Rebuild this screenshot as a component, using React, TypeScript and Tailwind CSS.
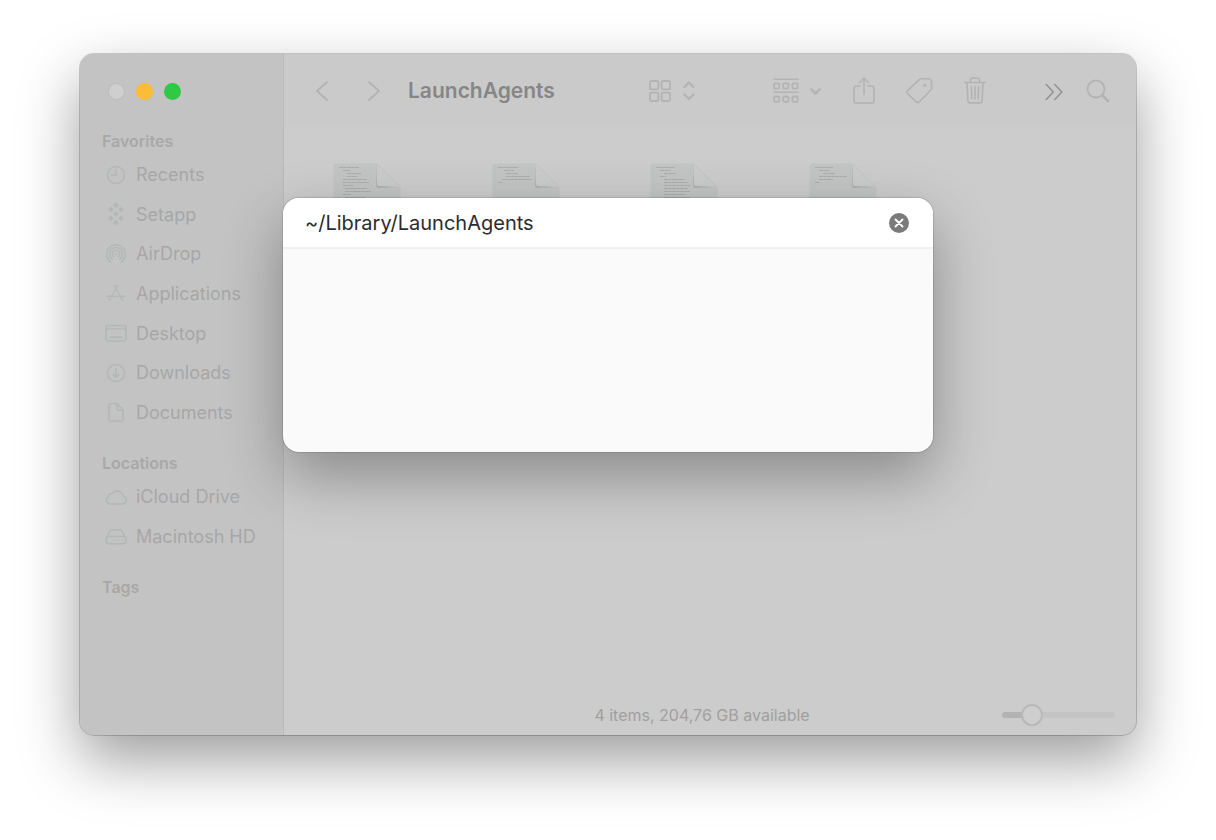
import { useState, type ReactNode } from "react";

type SidebarItem = { label: string; icon: ReactNode };

function Icon({ children }: { children: ReactNode }) {
  return (
    <svg
      className="size-6 shrink-0"
      viewBox="0 0 24 24"
      fill="none"
      stroke="#b4b7b7"
      strokeWidth={1.5}
      strokeLinecap="round"
      strokeLinejoin="round"
      aria-hidden="true"
    >
      {children}
    </svg>
  );
}

const FAVORITES: SidebarItem[] = [
  {
    label: "Recents",
    icon: (
      <Icon>
        <circle cx="12" cy="12" r="8.5" />
        <path d="M12 6.5V12H7.5" />
      </Icon>
    ),
  },
  {
    label: "Setapp",
    icon: (
      <Icon>
        <path
          d="M12 .8l2.500 2.500L12 5.800 9.500 3.300zM7 4.900l2.500 2.500L7 9.900 4.500 7.400zM17 4.900l2.500 2.500L17 9.900l-2.500-2.500zM12 9.500l2.500 2.500-2.500 2.500L9.500 12zM7 14.100l2.500 2.500L7 19.100l-2.500-2.500zM17 14.100l2.500 2.500-2.500 2.500-2.500-2.500zM12 18.200l2.500 2.500-2.500 2.500-2.500-2.500z"
          fill="#b4b7b7"
          strokeWidth={0.8}
        />
      </Icon>
    ),
  },
  {
    label: "AirDrop",
    icon: (
      <Icon>
        <path d="M7 20.2a9.4 9.4 0 1 1 10 0" />
        <path d="M8.3 17.3a6.5 6.5 0 1 1 7.4 0" />
        <path d="M9.8 14.9a3.7 3.7 0 1 1 4.4 0" />
        <circle cx="12" cy="12.3" r="1" fill="#b4b7b7" stroke="none" />
      </Icon>
    ),
  },
  {
    label: "Applications",
    icon: (
      <Icon>
        <path d="M10.3 4.5l8.2 14.5M13.7 4.500L7.800 14.900M5.600 18.600l.6-1M3 15.200h11.200M18 15.200h3" />
      </Icon>
    ),
  },
  {
    label: "Desktop",
    icon: (
      <Icon>
        <rect x="2" y="4.5" width="20" height="15.5" rx="2" />
        <path d="M2.5 7.7h19" />
        <path d="M7 16.300h10" strokeWidth={2} />
      </Icon>
    ),
  },
  {
    label: "Downloads",
    icon: (
      <Icon>
        <circle cx="12" cy="12" r="8.5" />
        <path d="M12 7.500v8.500M9 13.200l3 3 3-3" />
      </Icon>
    ),
  },
  {
    label: "Documents",
    icon: (
      <Icon>
        <path d="M13 3.500H7a2 2 0 0 0-2 2v13.500a2 2 0 0 0 2 2h10a2 2 0 0 0 2-2V10zM13 3.500V8.500A1.500 1.500 0 0 0 14.500 10H19" />
      </Icon>
    ),
  },
];

const LOCATIONS: SidebarItem[] = [
  {
    label: "iCloud Drive",
    icon: (
      <Icon>
        <path d="M6 19h12.200a4 4 0 0 0 .8-7.900A6 6 0 0 0 8 8.700a3.300 3.300 0 0 0-3.800 3.500A3.600 3.600 0 0 0 6 19z" />
      </Icon>
    ),
  },
  {
    label: "Macintosh HD",
    icon: (
      <Icon>
        <path d="M2.500 14.500l3.300-7.300a2.500 2.500 0 0 1 2.300-1.500h7.800a2.500 2.500 0 0 1 2.300 1.500l3.300 7.300" />
        <rect x="2" y="12.500" width="20" height="7.300" rx="2.500" />
        <path d="M10 16.200h9" strokeDasharray=".1 2.500" />
      </Icon>
    ),
  },
];

function SidebarSection({
  title,
  items = [],
  listClass = "",
}: {
  title: string;
  items?: SidebarItem[];
  listClass?: string;
}) {
  return (
    <section>
      <h2 className="pl-[22px] text-[16px] leading-[27px] font-semibold text-[#a8a8a8]">
        {title}
      </h2>
      {items.length > 0 && (
        <ul className={`grid auto-rows-fr ${listClass}`}>
          {items.map((item) => (
            <li key={item.label}>
              <a
                href={`#${item.label}`}
                className="flex h-full items-center gap-2 pl-6 text-[18px] whitespace-nowrap text-[#a7a7a7]"
              >
                {item.icon}
                {item.label}
              </a>
            </li>
          ))}
        </ul>
      )}
    </section>
  );
}

function ToolButton({
  label,
  className,
  viewBox,
  children,
}: {
  label: string;
  className: string;
  viewBox: string;
  children: ReactNode;
}) {
  return (
    <button aria-label={label} className="shrink-0">
      <svg
        className={className}
        viewBox={viewBox}
        fill="none"
        stroke="currentColor"
        strokeWidth={1.8}
        strokeLinecap="round"
        strokeLinejoin="round"
      >
        {children}
      </svg>
    </button>
  );
}

function Toolbar() {
  return (
    <header className="flex h-[73px] items-center bg-[#cacaca] pr-[26px] pl-8 text-[#b3b3b3]">
      <ToolButton label="Back" className="h-5 w-3" viewBox="0 0 12 20">
        <path d="M11 1L1 10l10 9" />
      </ToolButton>
      <div className="w-10" />
      <ToolButton label="Forward" className="h-5 w-3" viewBox="0 0 12 20">
        <path d="M1 1l10 9-10 9" />
      </ToolButton>
      <h1 className="ml-7 text-[21px] font-semibold text-[#868686]">
        LaunchAgents
      </h1>

      <div className="ml-auto flex items-center">
        <ToolButton label="View as icons" className="h-[22px] w-[46px]" viewBox="0 0 46 22">
          <rect x="1" y="1" width="8.4" height="8.4" rx="1.5" />
          <rect x="12.6" y="1" width="8.4" height="8.4" rx="1.5" />
          <rect x="1" y="12.6" width="8.4" height="8.4" rx="1.5" />
          <rect x="12.6" y="12.6" width="8.4" height="8.4" rx="1.5" />
          <path d="M35.500 7l4.500-4.500L44.500 7M35.500 14.500L40 19l4.500-4.500" strokeWidth={2.2} />
        </ToolButton>
      </div>
      <div className="ml-[78px] flex items-center">
        <ToolButton label="Group items" className="h-[26px] w-12" viewBox="0 0 48 26">
          <path d="M.9 1.2h24.200M.9 14.300h24.200" strokeWidth={1.5} />
          <rect x="1" y="5.3" width="5.2" height="5.3" rx="1.2" />
          <rect x="10.2" y="5.3" width="5.2" height="5.3" rx="1.2" />
          <rect x="19.4" y="5.3" width="5.2" height="5.3" rx="1.2" />
          <rect x="1" y="18.5" width="5.2" height="5.3" rx="1.2" />
          <rect x="10.2" y="18.5" width="5.2" height="5.3" rx="1.2" />
          <rect x="19.4" y="18.5" width="5.2" height="5.3" rx="1.2" />
          <path d="M38.500 11.500l4 4.200 4-4.200" strokeWidth={2.5} />
        </ToolButton>
      </div>
      <div className="ml-8 flex items-center gap-[31px]">
        <ToolButton label="Share" className="h-7 w-[22px]" viewBox="0 0 22 28">
          <path d="M7 9H3.300A2.300 2.300 0 0 0 1 11.300v12.400a2.300 2.300 0 0 0 2.300 2.300h15.400a2.300 2.300 0 0 0 2.300-2.300V11.300a2.300 2.300 0 0 0-2.300-2.300H15M11 17.500V1M6.500 5.500L11 1l4.500 4.500" strokeWidth={1.6} />
        </ToolButton>
        <ToolButton label="Edit tags" className="size-[27px]" viewBox="0 0 27 27">
          <path d="M15.800 1.800l6.400-.1a3.400 3.400 0 0 1 3.400 3.400v5.600a4 4 0 0 1-1.200 2.800L13.200 24.900a2.200 2.200 0 0 1-3.100 0L1.700 16.700a2.200 2.200 0 0 1 0-3.100L13 2.900a4 4 0 0 1 2.800-1.100z" strokeWidth={1.6} />
          <circle cx="18.8" cy="8.3" r="1.6" fill="currentColor" stroke="none" />
        </ToolButton>
        <ToolButton label="Delete" className="h-7 w-[22px]" viewBox="0 0 22 28">
          <path d="M.8 5.500h20.400M6.500 5.500V3A2 2 0 0 1 8.500 1h5a2 2 0 0 1 2 2v2.500M3 5.500l.9 18a2.500 2.500 0 0 0 2.500 2.400h9.200a2.500 2.500 0 0 0 2.500-2.400l.9-18M7.400 9.500l.4 12.500M11 9.500V22M14.600 9.500L14.200 22" strokeWidth={1.6} />
        </ToolButton>
      </div>
      <div className="ml-[59px] flex items-center gap-[23px] text-[#939393]">
        <ToolButton label="More toolbar items" className="size-[18px]" viewBox="0 0 18 18">
          <path d="M1.300 2.500L8.300 10l-7 7.500M9.800 2.500l7 7.500-7 7.500" strokeWidth={1.6} />
        </ToolButton>
        <div className="flex text-[#b3b3b3]">
          <ToolButton label="Search" className="size-6" viewBox="0 0 24 24">
            <circle cx="10" cy="10" r="8.5" />
            <path d="M16.500 16.500l5.500 5.500" strokeWidth={2.6} />
          </ToolButton>
        </div>
      </div>
    </header>
  );
}

// Indent and length of each line of code on the document previews
const FILES = [
  [[6, 20], [10, 8], [14, 14], [14, 10], [10, 24], [10, 26], [10, 10], [12, 22], [12, 26], [10, 8], [12, 20]],
  [[6, 20], [12, 10], [14, 12], [14, 24], [10, 30], [6, 4]],
  [[6, 18], [10, 10], [14, 12], [10, 6], [14, 20], [14, 24], [14, 26], [14, 24], [14, 26], [14, 22], [14, 26]],
  [[6, 18], [10, 10], [14, 12], [10, 28], [10, 14], [6, 4]],
];

function PlistFile({ lines }: { lines: number[][] }) {
  return (
    <svg className="h-[86px] w-[68px]" viewBox="0 0 68 86" aria-hidden="true">
      <path
        d="M3.500 1H44L67 24V83a2.500 2.500 0 0 1-2.500 2.500h-61A2.500 2.500 0 0 1 1 83V3.500A2.500 2.500 0 0 1 3.500 1z"
        fill="#c3c5c5"
        stroke="#c0c2c2"
        strokeWidth={0.8}
      />
      {lines.map(([indent, length], i) => (
        <path
          key={i}
          d={`M${indent} ${4.5 + i * 3}h${length}`}
          stroke="#abadad"
          strokeWidth={1.2}
          strokeDasharray="4 .5 3 .4"
        />
      ))}
      <path d="M44 1L43 22.500a2.500 2.500 0 0 0 2.500 2.500L67 24z" fill="#b0b2b2" />
      <path d="M44 1V21a2 2 0 0 0 2 2L67 24z" fill="#cacbcb" />
    </svg>
  );
}

function GoToFolder() {
  const [path, setPath] = useState("~/Library/LaunchAgents");

  return (
    <div
      role="dialog"
      aria-label="Go to folder"
      className="absolute top-36 left-1/2 flex min-h-[254px] w-[650px] max-w-full -translate-x-1/2 flex-col overflow-hidden rounded-[16px] bg-[#fafafa] shadow-[0_0_1px_1px_rgba(0,0,0,0.12),0_24px_60px_rgba(0,0,0,0.32)]"
    >
      <div className="flex h-[51px] items-center border-b-2 border-[#efefef] bg-white pt-px pr-6 pl-[22px]">
        <input
          type="text"
          aria-label="Folder path"
          value={path}
          onChange={(e) => setPath(e.target.value)}
          className="min-w-0 flex-1 bg-transparent text-[20px] text-[#2c2c2c] outline-none"
        />
        <button aria-label="Clear" onClick={() => setPath("")}>
          <svg className="size-5" viewBox="0 0 20 20">
            <circle cx="10" cy="10" r="10" fill="#7b7b7b" />
            <path d="M6.500 6.500l7 7M13.500 6.500l-7 7" stroke="#fff" strokeWidth={1.8} strokeLinecap="round" />
          </svg>
        </button>
      </div>
    </div>
  );
}

export default function App() {
  const [size, setSize] = useState(21);

  return (
    <div className="flex min-h-screen bg-white px-20 pt-[54px] pb-[105px] font-['Inter',sans-serif]">
      <main className="relative flex flex-1 rounded-[14px] bg-[#cccccc] shadow-[0_0_0_1px_rgba(0,0,0,0.18),0_25px_60px_rgba(0,0,0,0.39)]">
        <nav
          aria-label="Sidebar"
          className="w-[204px] shrink-0 rounded-l-[14px] border-r border-[#b9bbbb] bg-[#c3c3c3]"
        >
          <div className="flex h-[74px] items-center gap-[11px] pl-7">
            <button aria-label="Close" className="size-[17px] rounded-full border border-[#bbbbbb] bg-[#cfcfcf]" />
            <button aria-label="Minimize" className="size-[17px] rounded-full bg-[#fdbc35]" />
            <button aria-label="Zoom" className="size-[17px] rounded-full bg-[#2fc944]" />
          </div>
          <div className="flex flex-col gap-[18px]">
            <SidebarSection title="Favorites" items={FAVORITES} listClass="h-[277px]" />
            <SidebarSection title="Locations" items={LOCATIONS} listClass="h-[79px]" />
            <SidebarSection title="Tags" />
          </div>
        </nav>

        <div className="flex min-w-0 flex-1 flex-col overflow-hidden rounded-r-[14px]">
          <Toolbar />
          <div className="grid w-[638px] flex-1 grid-cols-4 content-start justify-items-center pt-9 pl-1">
            {FILES.map((lines, i) => (
              <PlistFile key={i} lines={lines} />
            ))}
          </div>
          <footer className="flex h-10 items-center pr-[21px] pl-[5px]">
            <div className="flex-1" />
            <p className="text-[16px] text-[#a0a0a0]">
              4 items, 204,76 GB available
            </p>
            <div className="flex flex-1 justify-end">
              <input
                type="range"
                aria-label="Icon size"
                value={size}
                onChange={(e) => setSize(Number(e.target.value))}
                style={{
                  backgroundImage: `linear-gradient(to right, #b3b3b3 ${size}%, #c4c4c4 ${size}%)`,
                }}
                className="h-[6px] w-[113px] appearance-none rounded-full [&::-webkit-slider-thumb]:size-[22px] [&::-webkit-slider-thumb]:appearance-none [&::-webkit-slider-thumb]:rounded-full [&::-webkit-slider-thumb]:border-2 [&::-webkit-slider-thumb]:border-[#b8b8b8] [&::-webkit-slider-thumb]:bg-[#cecece]"
              />
            </div>
          </footer>
        </div>

        <GoToFolder />
      </main>
    </div>
  );
}
